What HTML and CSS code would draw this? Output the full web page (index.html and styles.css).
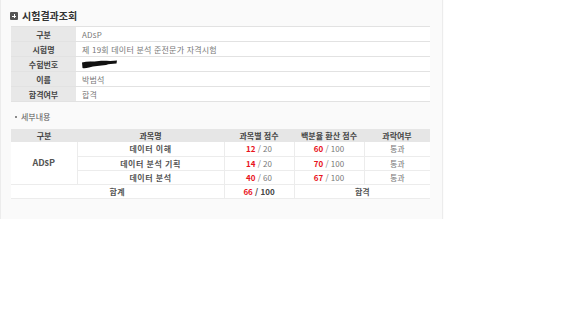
FILE: index.html
```html
<!DOCTYPE html>
<html lang="ko">
<head>
<meta charset="utf-8">
<link rel="stylesheet" href="styles.css">
</head>
<body>
<div class="panel">
  <h2 class="title"><span class="ico"></span>시험결과조회</h2>
  <table class="info">
    <tr><th>구분</th><td>ADsP</td></tr>
    <tr><th>시험명</th><td>제 19회 데이터 분석 준전문가 자격시험</td></tr>
    <tr><th>수험번호</th><td><svg class="redact" width="36" height="9" viewBox="0 0 36 9"><path d="M0 2.5 C5 1 11 2 17 1 C23 0.5 29 1.5 35 0.5 L34.5 3.5 C30 4 27 3.8 24 5 C18 5.5 12 6 7 7.5 C4 8.3 2 8.5 0.5 8 Z" fill="#111"/></svg></td></tr>
    <tr><th>이름</th><td>박범석</td></tr>
    <tr><th>합격여부</th><td>합격</td></tr>
  </table>
  <p class="sub"><span class="dot"></span>세부내용</p>
  <table class="detail">
    <colgroup><col class="c1"><col class="c2"><col class="c3"><col class="c4"><col class="c5"></colgroup>
    <thead>
      <tr><th>구분</th><th>과목명</th><th>과목별 점수</th><th>백분율 환산 점수</th><th>과락여부</th></tr>
    </thead>
    <tbody>
      <tr><td rowspan="3" class="grp">ADsP</td><td class="subj">데이터 이해</td><td><b>12</b> / 20</td><td><b>60</b> / 100</td><td>통과</td></tr>
      <tr><td class="subj">데이터 분석 기획</td><td><b>14</b> / 20</td><td><b>70</b> / 100</td><td>통과</td></tr>
      <tr><td class="subj">데이터 분석</td><td><b>40</b> / 60</td><td><b>67</b> / 100</td><td>통과</td></tr>
      <tr class="sum"><td colspan="2" class="subj">합계</td><td class="tot"><b>66</b> / 100</td><td colspan="2" class="pass">합격</td></tr>
    </tbody>
  </table>
</div>
</body>
</html>
```

FILE: styles.css
```css
* { box-sizing: border-box; }
html, body { margin: 0; padding: 0; background: #fff; }
body { font-family: "Noto Sans CJK KR", "Noto Sans", sans-serif; color: #666; font-size: 8px; }
.panel {
  width: 441px;
  margin-left: 1px;
  background: #fafafa;
  padding: 10px 12px 20px 9px;
  box-shadow: 0 1px 1px 1px #ececec;
}
.title {
  margin: 0 0 4px 0;
  display: flex;
  align-items: center;
  font-size: 10px;
  line-height: 12px;
  font-weight: bold;
  color: #333;
}
.ico {
  width: 8px; height: 8px;
  background: #555;
  margin-right: 4px;
  position: relative;
  border-radius: 1px;
}
.ico::before, .ico::after { content: ""; position: absolute; background: #fff; }
.ico::before { left: 2px; top: 3.5px; width: 4px; height: 1px; }
.ico::after { left: 3.5px; top: 2px; width: 1px; height: 4px; }
table { border-collapse: collapse; margin-left: 1px; width: 419px; }
.info th, .info td {
  height: 15px;
  padding: 0;
  border-top: 1px solid #e2e2e2;
  border-bottom: 1px solid #e2e2e2;
  font-size: 8px;
  line-height: 13px;
}
.info th { width: 65px; background: #e8e8e8; color: #444; font-weight: bold; text-align: center; }
.info td { background: #fff; padding-left: 6px; color: #777; letter-spacing: 0.2px; }
.redact { display: block; margin-top: 0; }
.sub { margin: 10px 0 7px 5px; display: flex; align-items: center; font-size: 8px; line-height: 10px; color: #555; }
.dot { width: 2px; height: 2px; background: #666; border-radius: 50%; margin-right: 4px; }
.detail th, .detail td { padding: 0; text-align: center; font-size: 8px; line-height: 13px; }
.detail th { height: 13px; background: #e6e6e6; color: #444; font-weight: bold; }
.detail td { height: 14px; background: #fff; border: 1px solid #ececec; border-top: 0; color: #777; }
.detail tr td:first-child { border-left: 0; }
.detail tr td:last-child { border-right: 0; }
.c1 { width: 66px; } .c2 { width: 147px; } .c3 { width: 70px; } .c4 { width: 70px; } .c5 { width: 66px; }
.detail td.grp { font-size: 9px; color: #555; font-weight: bold; }
.detail td.subj { color: #555; font-weight: bold; letter-spacing: 0.5px; }
.detail td b { color: #e8141c; font-weight: bold; }
.detail td.tot { color: #444; font-weight: bold; }
.detail td.pass { color: #555; font-weight: bold; }
```
